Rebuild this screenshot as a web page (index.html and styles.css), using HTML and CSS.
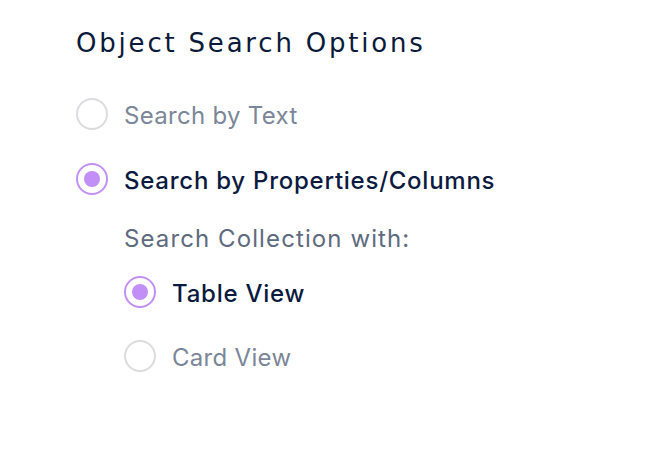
FILE: index.html
```html
<!DOCTYPE html>
<html>
<head>
<meta charset="utf-8">
<link rel="stylesheet" href="styles.css">
</head>
<body>
<div class="panel">
  <h1 class="title">Object Search Options</h1>
  <div class="option opt-first">
    <span class="radio"></span>
    <span class="label">Search by Text</span>
  </div>
  <div class="option opt-second">
    <span class="radio checked"></span>
    <span class="label active">Search by Properties/Columns</span>
  </div>
  <div class="sub">
    <div class="sub-label">Search Collection with:</div>
    <div class="option opt-table">
      <span class="radio checked"></span>
      <span class="label active">Table View</span>
    </div>
    <div class="option opt-card">
      <span class="radio"></span>
      <span class="label">Card View</span>
    </div>
  </div>
</div>
</body>
</html>
```
FILE: styles.css
```css
html, body {
  margin: 0;
  padding: 0;
  background: #ffffff;
}
.panel {
  display: flex;
  flex-direction: column;
  padding: 27px 0 0 76px;
  font-family: Inter, "Liberation Sans", sans-serif;
}
.title {
  margin: 0;
  font-size: 26px;
  line-height: 32px;
  font-weight: 400;
  letter-spacing: 2.8px;
  color: #0b1a3a;
  font-family: "DejaVu Sans", sans-serif;
}
.option {
  display: flex;
  align-items: center;
  gap: 16px;
  height: 32px;
}
.opt-first { margin-top: 39px; }
.opt-second { margin-top: 33px; }
.radio {
  box-sizing: border-box;
  width: 32px;
  height: 32px;
  border-radius: 50%;
  border: 2px solid #dcdce0;
  display: flex;
  align-items: center;
  justify-content: center;
  flex: none;
}
.radio.checked {
  border-color: #c490f8;
}
.radio.checked::after {
  content: "";
  width: 16px;
  height: 16px;
  border-radius: 50%;
  background: #c28ff7;
}
.label {
  font-size: 24px;
  line-height: 32px;
  padding-top: 3px;
  letter-spacing: 0.3px;
  color: #7b8698;
}
.label.active {
  color: #0b1a40;
  font-weight: 500;
  letter-spacing: 0.75px;
}
.sub {
  display: flex;
  flex-direction: column;
  padding-left: 48px;
}
.sub-label {
  margin-top: 28px;
  font-size: 24px;
  line-height: 32px;
  letter-spacing: 1.1px;
  color: #5e6a80;
}
.opt-table { margin-top: 21px; }
.opt-card { margin-top: 32px; }
```
